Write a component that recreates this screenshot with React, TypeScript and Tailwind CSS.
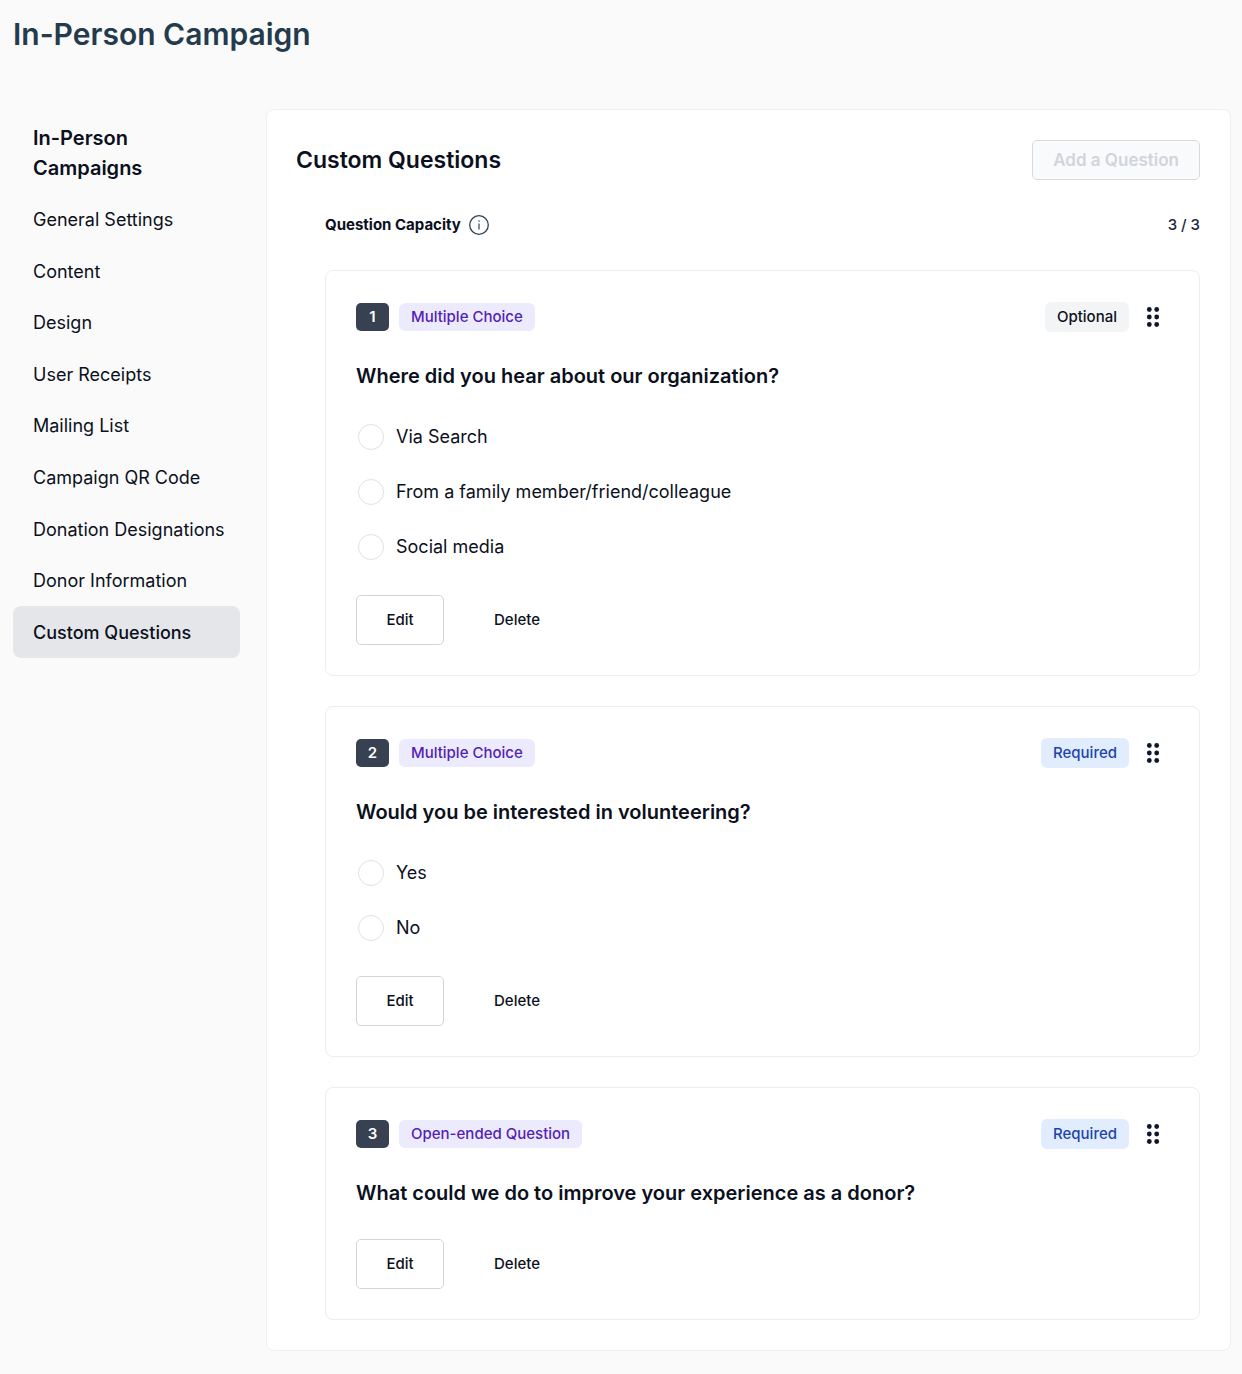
import React from 'react';

interface Question {
  id: number;
  type: string;
  title: string;
  required: boolean;
  options: string[];
}

const navItems = [
  'General Settings',
  'Content',
  'Design',
  'User Receipts',
  'Mailing List',
  'Campaign QR Code',
  'Donation Designations',
  'Donor Information',
  'Custom Questions',
];

const questions: Question[] = [
  {
    id: 1,
    type: 'Multiple Choice',
    title: 'Where did you hear about our organization?',
    required: false,
    options: ['Via Search', 'From a family member/friend/colleague', 'Social media'],
  },
  {
    id: 2,
    type: 'Multiple Choice',
    title: 'Would you be interested in volunteering?',
    required: true,
    options: ['Yes', 'No'],
  },
  {
    id: 3,
    type: 'Open-ended Question',
    title: 'What could we do to improve your experience as a donor?',
    required: true,
    options: [],
  },
];

const MAX_QUESTIONS = 3;

const InfoIcon = () => (
  <svg className="size-5" viewBox="0 0 20 20" fill="none" stroke="#2b4255" aria-hidden="true">
    <circle cx="10" cy="10" r="9.3" strokeWidth="1.3" />
    <path d="M10 8.4v6" strokeWidth="1.2" />
    <circle cx="10" cy="6" r="0.8" fill="#2b4255" stroke="none" />
  </svg>
);

const GripIcon = () => (
  <svg className="h-5 w-[14px]" viewBox="0 0 14 20" fill="#0f172a" aria-hidden="true">
    {[2.5, 10, 17.5].map((y) => (
      <React.Fragment key={y}>
        <circle cx="3.3" cy={y} r="2.4" />
        <circle cx="10.7" cy={y} r="2.4" />
      </React.Fragment>
    ))}
  </svg>
);

const Sidebar = ({active}: {active: string}) => (
  <nav className="w-[227px] shrink-0 pt-[14px]">
    <h2 className="px-5 mb-[11px] text-[20px] leading-[30px] font-semibold">
      In-Person Campaigns
    </h2>
    <ul className="grid h-[464px] auto-rows-fr grid-cols-1">
      {navItems.map((item) => (
        <li key={item}>
          <a
            href="#"
            aria-current={item === active ? 'page' : undefined}
            className={`flex h-full items-center rounded-lg px-5 text-[18px] whitespace-nowrap ${
              item === active ? 'bg-[#e5e6ea] font-medium' : ''
            }`}
          >
            {item}
          </a>
        </li>
      ))}
    </ul>
  </nav>
);

const QuestionCard = ({question}: {question: Question}) => {
  const hasOptions = question.options.length > 0;

  return (
    <article className="rounded-lg border border-[#ededef] p-[30px]">
      <div className="flex h-8 items-center justify-between text-[15px] leading-6">
        <div className="flex items-center gap-[10px]">
          <span className="flex h-7 w-[33px] items-center justify-center rounded-[5px] bg-[#374151] font-semibold text-white">
            {question.id}
          </span>
          <span className="flex h-7 items-center rounded-md bg-[#ecebfd] px-3 font-medium text-[#5521b5]">
            {question.type}
          </span>
        </div>
        <div className="flex items-center gap-[17px] pr-[9px]">
          <span
            className={`flex h-[30px] items-center rounded-md px-3 font-medium ${
              question.required ? 'bg-[#e1edff] text-[#1e42ae]' : 'bg-[#f3f4f6]'
            }`}
          >
            {question.required ? 'Required' : 'Optional'}
          </span>
          <button type="button" aria-label="Reorder question" className="cursor-grab">
            <GripIcon />
          </button>
        </div>
      </div>

      <h3 className="mt-7 text-[20px] leading-[30px] font-semibold">{question.title}</h3>

      {hasOptions && (
        <div className="mt-[18px] flex flex-col">
          {question.options.map((option) => (
            <label key={option} className="flex h-[55px] items-center gap-3 pl-0.5 text-[18px]">
              <input
                type="radio"
                name={`question-${question.id}`}
                value={option}
                className="size-[26px] appearance-none rounded-full border border-[#e0e1e4] bg-white checked:border-8 checked:border-[#374151]"
              />
              {option}
            </label>
          ))}
        </div>
      )}

      <div className={`flex gap-5 text-[15px] font-medium ${hasOptions ? 'mt-[21px]' : 'mt-[31px]'}`}>
        <button type="button" className="h-[50px] w-[88px] rounded-[5px] border border-[#d1d5db]">
          Edit
        </button>
        <button type="button" className="h-[50px] px-[30px]">
          Delete
        </button>
      </div>
    </article>
  );
};

const App = () => {
  return (
    <div className="min-h-screen bg-[#fafafa] pt-3 pr-[11px] pb-[23px] pl-[13px] font-['Inter',sans-serif] text-[#0b1020]">
      <h1 className="text-[30px] leading-[44px] font-semibold text-[#243b4d]">
        In-Person Campaign
      </h1>
      <div className="mt-[53px] flex items-start gap-[26px]">
        <Sidebar active="Custom Questions" />
        <main className="min-w-0 flex-1 rounded-lg border border-[#f0f0f1] bg-white py-[30px] pr-[30px] pl-[29px]">
          <div className="flex items-center justify-between">
            <h2 className="text-[23px] leading-8 font-semibold">Custom Questions</h2>
            <button
              type="button"
              disabled
              className="h-10 rounded-[5px] border border-[#d6d9de] bg-[#f9fafb] px-5 text-[17px] leading-6 font-semibold text-[#d1d5db]"
            >
              Add a Question
            </button>
          </div>
          <div className="pl-[29px]">
            <div className="my-[30px] flex h-[30px] items-center justify-between text-[15px] leading-6">
              <div className="flex items-center gap-2">
                <span className="font-bold">Question Capacity</span>
                <button type="button" aria-label="About question capacity">
                  <InfoIcon />
                </button>
              </div>
              <span className="font-medium text-[#1c2740]">
                {questions.length} / {MAX_QUESTIONS}
              </span>
            </div>
            <div className="flex flex-col gap-[30px]">
              {questions.map((question) => (
                <QuestionCard key={question.id} question={question} />
              ))}
            </div>
          </div>
        </main>
      </div>
    </div>
  );
};

export default App;
